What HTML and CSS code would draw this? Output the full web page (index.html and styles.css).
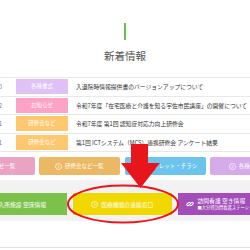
FILE: index.html
```html
<!DOCTYPE html>
<html lang="ja">
<head>
    <meta charset="UTF-8">
    <title>新着情報</title>
    <link rel="stylesheet" href="styles.css">
</head>
<body>
<div class="page">
    <div class="head">
        <span class="bar"></span>
        <h2>新着情報</h2>
    </div>

    <ul class="news">
        <li><span class="date">2025.06.10</span><span class="cat cat-form">各種書式</span><a href="#">入退院時情報提供書のバージョンアップについて</a></li>
        <li><span class="date">2025.06.02</span><span class="cat cat-info">お知らせ</span><a href="#">令和7年度「在宅医療と介護を知る宇佐市民講座」の開催について</a></li>
        <li><span class="date">2025.05.21</span><span class="cat cat-study">研修会など</span><a href="#">令和7年度 第1回 認知症対応力向上研修会</a></li>
        <li><span class="date">2025.05.01</span><span class="cat cat-study">研修会など</span><a href="#">第1回 ICTシステム（MCS）連携研修会 アンケート結果</a></li>
    </ul>

    <div class="links">
        <a href="#" class="btn btn-pink"><svg class="ic" viewBox="0 0 10 10"><circle cx="5" cy="5" r="4.3"/><path d="M4.2 3.1 6 5 4.2 6.9"/></svg>お知らせ一覧</a>
        <a href="#" class="btn btn-orange"><svg class="ic" viewBox="0 0 10 10"><circle cx="5" cy="5" r="4.3"/><path d="M4.2 3.1 6 5 4.2 6.9"/></svg>研修会など一覧</a>
        <a href="#" class="btn btn-blue"><svg class="ic" viewBox="0 0 10 10"><circle cx="5" cy="5" r="4.3"/><path d="M4.2 3.1 6 5 4.2 6.9"/></svg>パンフレット・チラシ</a>
        <a href="#" class="btn btn-lilac"><svg class="ic" viewBox="0 0 10 10"><circle cx="5" cy="5" r="4.3"/><path d="M4.2 3.1 6 5 4.2 6.9"/></svg>各種書式一覧</a>
    </div>

    <div class="band">
        <div class="big">
            <a href="#" class="big-btn big-green"><svg class="ic" viewBox="0 0 10 10"><circle cx="5" cy="5" r="4.3"/><path d="M4.2 3.1 6 5 4.2 6.9"/></svg>入所施設 空床情報</a>
            <a href="#" class="big-btn big-yellow"><svg class="ic" viewBox="0 0 10 10"><circle cx="5" cy="5" r="4.3"/><path d="M4.2 3.1 6 5 4.2 6.9"/></svg>医療機関の連絡窓口</a>
            <a href="#" class="big-btn big-purple">
                <svg class="ic-link" viewBox="0 0 10 10"><path d="M4.6 5.4 3.3 6.7a1.3 1.3 0 0 1-1.9-1.9l1.6-1.6a1.3 1.3 0 0 1 1.9 0"/><path d="M5.4 4.6 6.7 3.3a1.3 1.3 0 0 1 1.9 1.9L7 6.8a1.3 1.3 0 0 1-1.9 0"/></svg>
                <span class="big-txt">訪問看護 空き情報<small>■大分県訪問看護ステーション協議会</small></span>
            </a>
        </div>
    </div>

    <div class="foot"></div>

    <!-- 注目マーク -->
    <svg class="mark" viewBox="0 0 250 250">
        <polygon points="131,144 148,144 148,163 160,163 140.5,188 121,163 131,163"/>
        <ellipse cx="123" cy="204" rx="55" ry="18.5"/>
    </svg>
</div>
</body>
</html>
```

FILE: styles.css
```css
* {
    margin: 0;
    padding: 0;
    box-sizing: border-box;
}

ul, li {
    list-style: none;
}

a {
    text-decoration: none;
}

body {
    background: #fff;
    font-family: "Noto Sans CJK JP", "Noto Sans", sans-serif;
    color: #333;
}

.page {
    position: relative;
    width: 250px;
    height: 250px;
    overflow: hidden;
}

/* 見出し */
.head {
    display: flex;
    flex-direction: column;
    align-items: center;
    padding-top: 23px;
}

.head .bar {
    display: block;
    width: 2px;
    height: 17px;
    margin-left: -1px;
    background: #6cc04a;
}

.head h2 {
    margin-top: 9.5px;
    font-size: 10.5px;
    line-height: 12px;
    font-weight: normal;
    color: #555;
}

/* 新着リスト */
.news {
    margin: 15.5px 0 0 -60px;
    width: 400px;
    border-top: 1px solid #e8e8e8;
}

.news li {
    display: flex;
    align-items: center;
    height: 18.5px;
    border-bottom: 1px solid #e8e8e8;
    white-space: nowrap;
}

.news .date {
    width: 62px;
    text-align: right;
    font-size: 5.8px;
    color: #5a80b0;
}

.news .cat {
    width: 52px;
    height: 15px;
    margin-left: 14px;
    line-height: 15px;
    text-align: center;
    font-size: 5.5px;
    color: #fff;
}

.cat-form {
    background: #dfc1f6;
}

.cat-info {
    background: #fda4c6;
}

.cat-study {
    background: #ffc76e;
}

.news a {
    margin-left: 8px;
    font-size: 5.8px;
    color: #333;
}

/* 一覧ボタン */
.links {
    display: flex;
    gap: 4.5px;
    margin: 5px 0 0 -46.5px;
    width: 400px;
}

.btn {
    display: flex;
    align-items: center;
    justify-content: center;
    gap: 2.5px;
    width: 81px;
    height: 18px;
    border-radius: 2px;
    font-size: 5.5px;
    color: #fff;
    white-space: nowrap;
}

.btn-pink {
    background: #eba3c4;
}

.btn-orange {
    background: #ebb963;
}

.btn-blue {
    background: #6cc4ec;
}

.btn-lilac {
    background: #d6abea;
}

.ic {
    width: 7px;
    height: 7px;
    flex: none;
    fill: none;
    stroke: #fff;
    stroke-width: 1;
}

/* 空き情報など */
.band {
    margin-top: 5px;
    padding: 13px 0 6px;
    background: #f2f2f2;
}

.big {
    display: flex;
    gap: 5.5px;
    margin-left: -32.5px;
    width: 400px;
}

.big-btn {
    display: flex;
    align-items: center;
    justify-content: center;
    gap: 3px;
    width: 99.5px;
    height: 22px;
    font-size: 5.8px;
    color: #fff;
    white-space: nowrap;
}

.big-green {
    background: #7cc24a;
}

.big-yellow {
    background: #f1d800;
}

.big-purple {
    justify-content: flex-start;
    padding-left: 8px;
    gap: 4px;
    background: #a24db9;
}

.ic-link {
    width: 8px;
    height: 8px;
    flex: none;
    fill: none;
    stroke: #fff;
    stroke-width: 1.3;
    stroke-linecap: round;
}

.big-txt {
    display: flex;
    flex-direction: column;
    line-height: 6.5px;
}

.big-txt small {
    font-size: 4.3px;
    line-height: 5px;
}

.foot {
    margin-top: 26px;
    border-top: 1px solid #e2e2e2;
}

.mark {
    position: absolute;
    left: 0;
    top: 0;
    width: 250px;
    height: 250px;
    pointer-events: none;
}

.mark polygon {
    fill: #e8161c;
}

.mark ellipse {
    fill: none;
    stroke: #e8161c;
    stroke-width: 2;
}
```
